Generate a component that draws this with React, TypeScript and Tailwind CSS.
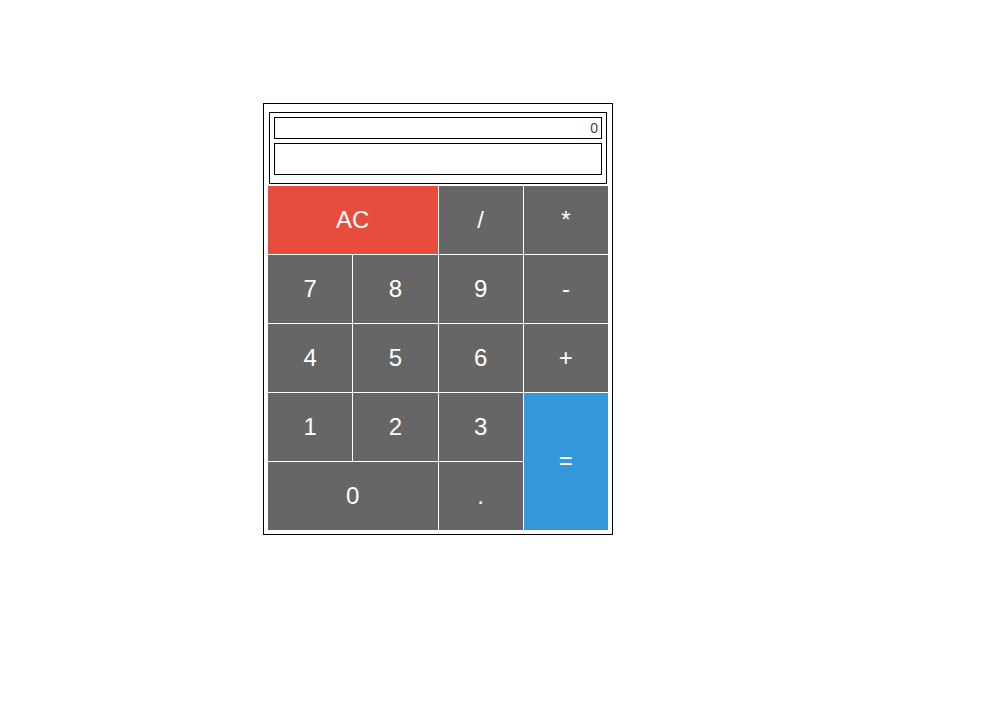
import React, { useState } from "react";

type Key = {
  label: string;
  className: string;
};

const keys: Key[] = [
  { label: "AC", className: "col-span-2 bg-[#e74c3c]" },
  { label: "/", className: "bg-[#666666]" },
  { label: "*", className: "bg-[#666666]" },
  { label: "7", className: "bg-[#666666]" },
  { label: "8", className: "bg-[#666666]" },
  { label: "9", className: "bg-[#666666]" },
  { label: "-", className: "bg-[#666666]" },
  { label: "4", className: "bg-[#666666]" },
  { label: "5", className: "bg-[#666666]" },
  { label: "6", className: "bg-[#666666]" },
  { label: "+", className: "bg-[#666666]" },
  { label: "1", className: "bg-[#666666]" },
  { label: "2", className: "bg-[#666666]" },
  { label: "3", className: "bg-[#666666]" },
  { label: "=", className: "row-span-2 bg-[#3498db]" },
  { label: "0", className: "col-span-2 bg-[#666666]" },
  { label: ".", className: "bg-[#666666]" },
];

export default function App() {
  const [output] = useState("0");
  const [input] = useState("");

  return (
    <div className="min-h-[712px] w-full bg-white font-['Liberation_Sans',Arial,sans-serif]">
      <div className="pl-[263px] pt-[103px]">
        <div className="w-[350px] border border-black px-1 pt-2 pb-1">
          {/* display */}
          <div className="mx-px mb-0.5 flex flex-col gap-1 border border-black p-1 pb-2">
            <div className="h-[22px] border border-black pr-[3px] text-right text-[14px] leading-[20px] text-[#444]">
              {output}
            </div>
            <div className="h-[32px] border border-black px-1 text-[14px] leading-[30px]">
              {input}
            </div>
          </div>
          {/* keypad */}
          <div className="grid grid-cols-4 auto-rows-[68px] gap-px bg-white">
            {keys.map((k) => (
              <button
                key={k.label}
                className={`flex items-center justify-center pb-px text-[24px] text-white ${k.className}`}
              >
                {k.label}
              </button>
            ))}
          </div>
        </div>
      </div>
    </div>
  );
}
